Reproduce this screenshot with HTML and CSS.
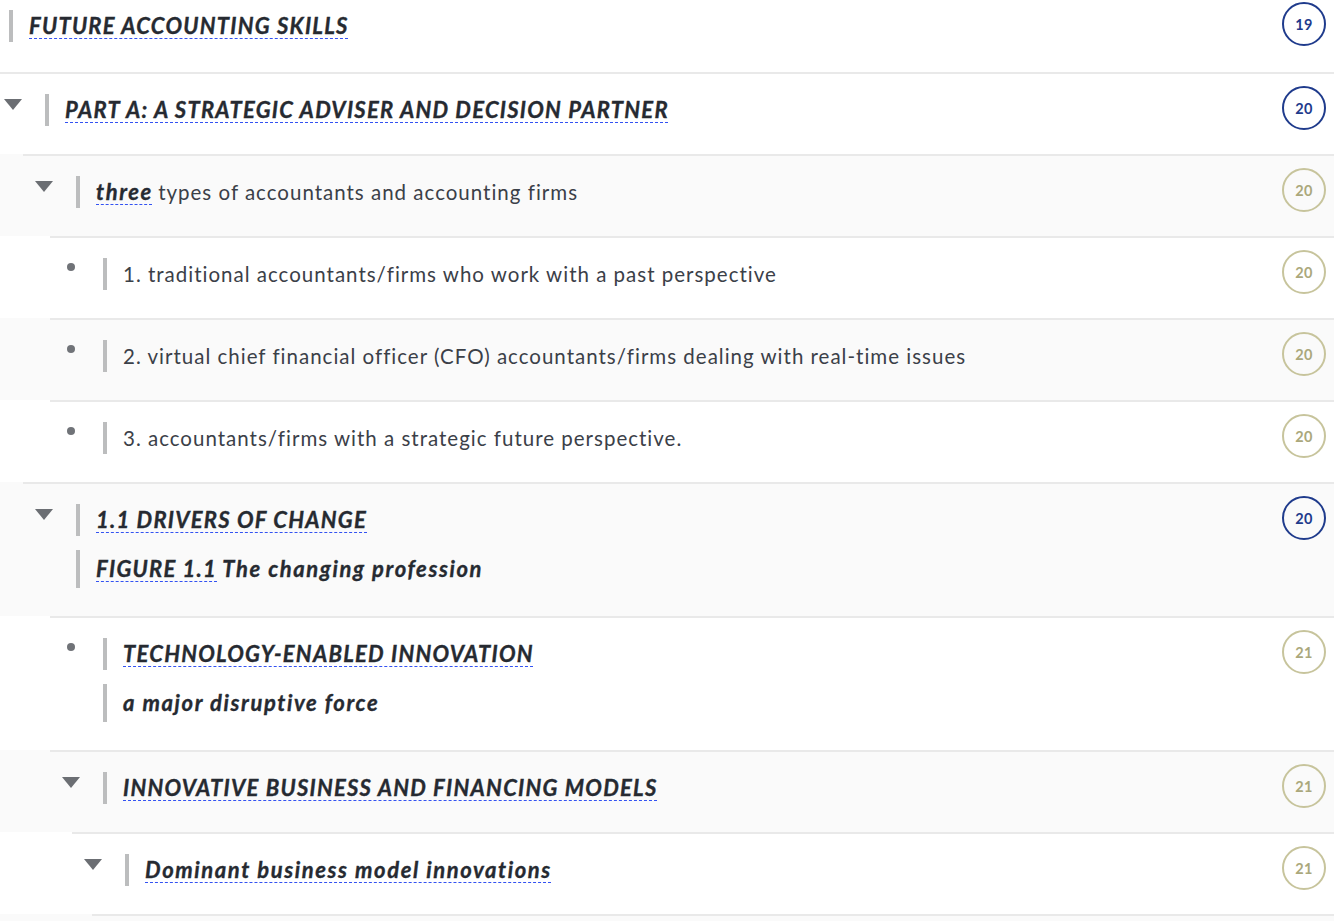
FILE: index.html
```html
<!DOCTYPE html>
<html lang="en">
<head>
<meta charset="utf-8">
<title>Outline</title>
<link rel="stylesheet" href="styles.css">
</head>
<body>
<div class="outline">

  <div class="row">
    <div class="inner first">
      <div class="lines">
        <div class="line"><span class="link caps">FUTURE ACCOUNTING SKILLS</span></div>
      </div>
      <span class="badge navy">19</span>
    </div>
  </div>

  <div class="row">
    <div class="inner i0">
      <span class="icon"><svg class="tri" viewBox="0 0 18 11"><polygon points="0,0 18,0 9,11"/></svg></span>
      <div class="lines">
        <div class="line"><span class="link caps">PART A: A STRATEGIC ADVISER AND DECISION PARTNER</span></div>
      </div>
      <span class="badge navy">20</span>
    </div>
  </div>

  <div class="row gray">
    <div class="inner i1">
      <span class="icon"><svg class="tri" viewBox="0 0 18 11"><polygon points="0,0 18,0 9,11"/></svg></span>
      <div class="lines">
        <div class="line"><span class="link strong">three</span> <span class="plain">types of accountants and accounting firms</span></div>
      </div>
      <span class="badge olive">20</span>
    </div>
  </div>

  <div class="row">
    <div class="inner i2">
      <span class="icon"><span class="dot"></span></span>
      <div class="lines">
        <div class="line"><span class="plain">1. traditional accountants/firms who work with a past perspective</span></div>
      </div>
      <span class="badge olive">20</span>
    </div>
  </div>

  <div class="row gray">
    <div class="inner i2">
      <span class="icon"><span class="dot"></span></span>
      <div class="lines">
        <div class="line"><span class="plain">2. virtual chief financial officer (CFO) accountants/firms dealing with real-time issues</span></div>
      </div>
      <span class="badge olive">20</span>
    </div>
  </div>

  <div class="row">
    <div class="inner i2">
      <span class="icon"><span class="dot"></span></span>
      <div class="lines">
        <div class="line"><span class="plain">3. accountants/firms with a strategic future perspective.</span></div>
      </div>
      <span class="badge olive">20</span>
    </div>
  </div>

  <div class="row gray">
    <div class="inner i1">
      <span class="icon"><svg class="tri" viewBox="0 0 18 11"><polygon points="0,0 18,0 9,11"/></svg></span>
      <div class="lines">
        <div class="line"><span class="link caps">1.1 DRIVERS OF CHANGE</span></div>
        <div class="line second"><span class="link caps">FIGURE 1.1</span> <span class="strong">The changing profession</span></div>
      </div>
      <span class="badge navy">20</span>
    </div>
  </div>

  <div class="row">
    <div class="inner i2">
      <span class="icon"><span class="dot"></span></span>
      <div class="lines">
        <div class="line"><span class="link caps">TECHNOLOGY-ENABLED INNOVATION</span></div>
        <div class="line second"><span class="strong">a major disruptive force</span></div>
      </div>
      <span class="badge olive">21</span>
    </div>
  </div>

  <div class="row gray">
    <div class="inner i2">
      <span class="icon"><svg class="tri" viewBox="0 0 18 11"><polygon points="0,0 18,0 9,11"/></svg></span>
      <div class="lines">
        <div class="line"><span class="link caps">INNOVATIVE BUSINESS AND FINANCING MODELS</span></div>
      </div>
      <span class="badge olive">21</span>
    </div>
  </div>

  <div class="row">
    <div class="inner i3">
      <span class="icon"><svg class="tri" viewBox="0 0 18 11"><polygon points="0,0 18,0 9,11"/></svg></span>
      <div class="lines">
        <div class="line"><span class="link strong">Dominant business model innovations</span></div>
      </div>
      <span class="badge olive">21</span>
    </div>
  </div>

  <div class="row gray">
    <div class="inner i4 empty"></div>
  </div>

</div>
</body>
</html>
```

FILE: styles.css
```css
html, body {
  margin: 0;
  padding: 0;
  background: #ffffff;
}

body {
  font-family: Lato, "Open Sans", sans-serif;
  color: #2a2e35;
  width: 1334px;
  overflow: hidden;
}

.outline {
  display: flex;
  flex-direction: column;
}

.row {
  background: #ffffff;
}

.row.gray {
  background: #fafafa;
}

.inner {
  display: flex;
  align-items: flex-start;
  border-top: 2px solid #e9e9e9;
  padding: 20px 8px 28px 0;
}

.inner.first {
  border-top: none;
  padding-top: 10px;
  padding-bottom: 30px;
  padding-left: 9px;
}

.inner.i0 { margin-left: 0; padding-left: 4px; }
.inner.i1 { margin-left: 23px; padding-left: 12px; }
.inner.i2 { margin-left: 50px; padding-left: 12px; }
.inner.i3 { margin-left: 72px; padding-left: 12px; }
.inner.i4 { margin-left: 92px; padding-left: 12px; }

.inner.empty {
  height: 60px;
}

.icon {
  width: 18px;
  height: 32px;
  margin-right: 23px;
  flex: none;
  display: flex;
  justify-content: center;
  align-items: flex-start;
}

.tri {
  width: 18px;
  height: 11px;
  margin-top: 5px;
  fill: #6b6e73;
}

.dot {
  width: 8px;
  height: 8px;
  border-radius: 50%;
  background: #707378;
  margin-top: 5px;
}

.lines {
  display: flex;
  flex-direction: column;
  gap: 14px;
  flex: 1;
}

.line {
  border-left: 4px solid #bcbdbe;
  padding-left: 16px;
  line-height: 32px;
  font-size: 20.5px;
  white-space: nowrap;
}

.line.second {
  padding-top: 3px;
  padding-bottom: 3px;
}

.caps,
.strong {
  font-size: 22px;
  font-weight: 700;
  font-style: italic;
  color: #262a31;
  -webkit-text-stroke: 0.35px #262a31;
}

.caps {
  letter-spacing: 1.25px;
}

.strong {
  letter-spacing: 1.6px;
}

.plain {
  font-weight: 400;
  color: #3b4048;
  letter-spacing: 1px;
}

.link {
  text-decoration: underline dashed #3352f2;
  text-decoration-thickness: 1px;
  text-underline-offset: 4px;
}

.badge {
  flex: none;
  margin: -8px 0 -4px auto;
  width: 40px;
  height: 40px;
  border: 2px solid;
  border-radius: 50%;
  display: flex;
  align-items: center;
  justify-content: center;
  font-size: 14.5px;
  font-weight: 700;
  letter-spacing: 0.4px;
}

.badge.navy {
  border-color: #1f3b8c;
  color: #1f3b8c;
}

.badge.olive {
  border-color: #c7c49c;
  color: #aba87c;
}
```
